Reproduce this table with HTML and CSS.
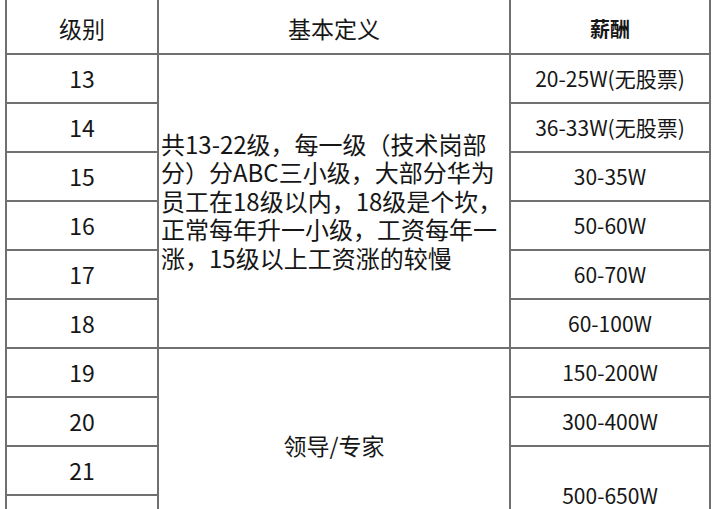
FILE: index.html
```html
<!DOCTYPE html>
<html lang="zh-CN">
<head>
<meta charset="utf-8">
<title>级别薪酬</title>
<link rel="stylesheet" href="styles.css">
</head>
<body>
<table class="grid">
  <colgroup>
    <col class="c-level">
    <col class="c-def">
    <col class="c-pay">
  </colgroup>
  <thead>
    <tr class="head">
      <th class="h-level">级别</th>
      <th class="h-def">基本定义</th>
      <th class="h-pay">薪酬</th>
    </tr>
  </thead>
  <tbody>
    <tr><td class="lv">13</td><td class="def" rowspan="6">共13-22级，每一级（技术岗部<br>分）分ABC三小级，大部分华为<br>员工在18级以内，18级是个坎，<br>正常每年升一小级，工资每年一<br>涨，15级以上工资涨的较慢</td><td class="pay">20-25W(无股票)</td></tr>
    <tr><td class="lv">14</td><td class="pay">36-33W(无股票)</td></tr>
    <tr><td class="lv">15</td><td class="pay">30-35W</td></tr>
    <tr><td class="lv">16</td><td class="pay">50-60W</td></tr>
    <tr><td class="lv">17</td><td class="pay">60-70W</td></tr>
    <tr><td class="lv">18</td><td class="pay">60-100W</td></tr>
    <tr><td class="lv">19</td><td class="lead" rowspan="4">领导/专家</td><td class="pay">150-200W</td></tr>
    <tr><td class="lv">20</td><td class="pay">300-400W</td></tr>
    <tr><td class="lv">21</td><td class="pay pay-last" rowspan="2">500-650W</td></tr>
    <tr><td class="lv">22</td></tr>
  </tbody>
</table>
</body>
</html>
```

FILE: styles.css
```css
html, body {
  margin: 0;
  padding: 0;
  background: #ffffff;
  overflow: hidden;
}

body {
  font-family: "Noto Sans CJK SC", "Noto Sans", sans-serif;
  color: #161616;
  padding-left: 5px;
}

.grid {
  border-collapse: collapse;
  table-layout: fixed;
  width: 704px;
}

.c-level { width: 152px; }
.c-def { width: 352px; }
.c-pay { width: 200px; }

.grid th,
.grid td {
  border: 2px solid #707070;
  padding: 0;
  text-align: center;
  vertical-align: middle;
  line-height: 1.2;
}

.grid thead th {
  border-top: none;
  padding-top: 5px;
}

.head {
  height: 54px;
}

.grid tbody tr {
  height: 49px;
}

.grid .h-level,
.grid .h-def {
  font-weight: 400;
  font-size: 23px;
}

.grid .h-pay {
  font-weight: 700;
  font-size: 20px;
}

.grid .lv {
  font-size: 23px;
}

.grid .def {
  text-align: left;
  font-size: 24px;
  line-height: 28.6px;
  padding-left: 2px;
  white-space: nowrap;
}

.grid .lead {
  font-size: 23px;
}

.grid .pay {
  font-size: 21px;
}

.grid .pay-last {
  padding-top: 2px;
}
```
